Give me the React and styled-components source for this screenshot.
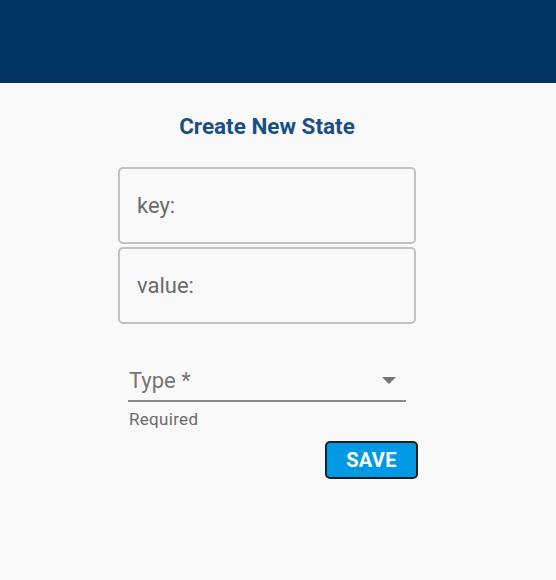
import React from 'react';
import styled, { createGlobalStyle } from 'styled-components';

const GlobalStyle = createGlobalStyle`
  body {
    margin: 0;
    background: #f9f9f9;
    font-family: Roboto, "Liberation Sans", sans-serif;
  }
`;

const App = () => {
  return (
    <Page>
      <GlobalStyle />
      <TopBar />
      <Form>
        <Title>Create New State</Title>
        <Field placeholder='key:' />
        <Field placeholder='value:' />
        <SelectWrap>
          <SelectBox>
            <SelectLabel>Type *</SelectLabel>
            <Arrow viewBox='0 0 14 7'>
              <path d='M0 0h14L7 7z' />
            </Arrow>
          </SelectBox>
          <HelperText>Required</HelperText>
        </SelectWrap>
        <ButtonRow>
          <SaveButton>SAVE</SaveButton>
        </ButtonRow>
      </Form>
    </Page>
  );
};

const Page = styled.div`
  width: 556px;
  min-height: 580px;
  background: #f9f9f9;
`;

const TopBar = styled.div`
  height: 83px;
  background-color: #003262;
`;

const Form = styled.div`
  width: 298px;
  margin-left: 118px;
  display: flex;
  flex-direction: column;
`;

const Title = styled.h2`
  margin: 29px 0 27px;
  text-align: center;
  font-size: 22.5px;
  line-height: 28px;
  font-weight: 700;
  color: #1a4f85;
`;

const Field = styled.input`
  box-sizing: border-box;
  width: 298px;
  height: 77px;
  margin-bottom: 3px;
  padding: 0 17px;
  border: 2px solid #c2c2c2;
  border-radius: 5px;
  background: #f9f9f9;
  font-family: Roboto, "Liberation Sans", sans-serif;
  font-size: 22px;
  color: #333;
  outline: none;
  &::placeholder {
    color: #6b6b6b;
  }
`;

const SelectWrap = styled.div`
  margin: 37px 10px 0;
`;

const SelectBox = styled.div`
  box-sizing: border-box;
  display: flex;
  align-items: center;
  justify-content: space-between;
  height: 38px;
  padding-bottom: 4px;
  border-bottom: 2px solid #8c8c8c;
`;

const SelectLabel = styled.span`
  font-size: 22px;
  color: #757575;
  padding-left: 1px;
`;

const Arrow = styled.svg`
  width: 14px;
  height: 7px;
  fill: #757575;
  margin: 0 10px 0 0;
`;

const HelperText = styled.p`
  margin: 8px 0 0 1px;
  font-size: 17px;
  line-height: 19px;
  color: #6b6b6b;
  letter-spacing: 0.3px;
`;

const ButtonRow = styled.div`
  display: flex;
  justify-content: flex-end;
  margin: 12px -2px 0 0;
`;

const SaveButton = styled.button`
  box-sizing: border-box;
  width: 93px;
  height: 38px;
  border: 2px solid #1f1f1f;
  border-radius: 5px;
  background-color: #0099e3;
  color: #fff;
  font-family: Roboto, "Liberation Sans", sans-serif;
  font-size: 20px;
  font-weight: 700;
  letter-spacing: 0.3px;
`;

export default App;
